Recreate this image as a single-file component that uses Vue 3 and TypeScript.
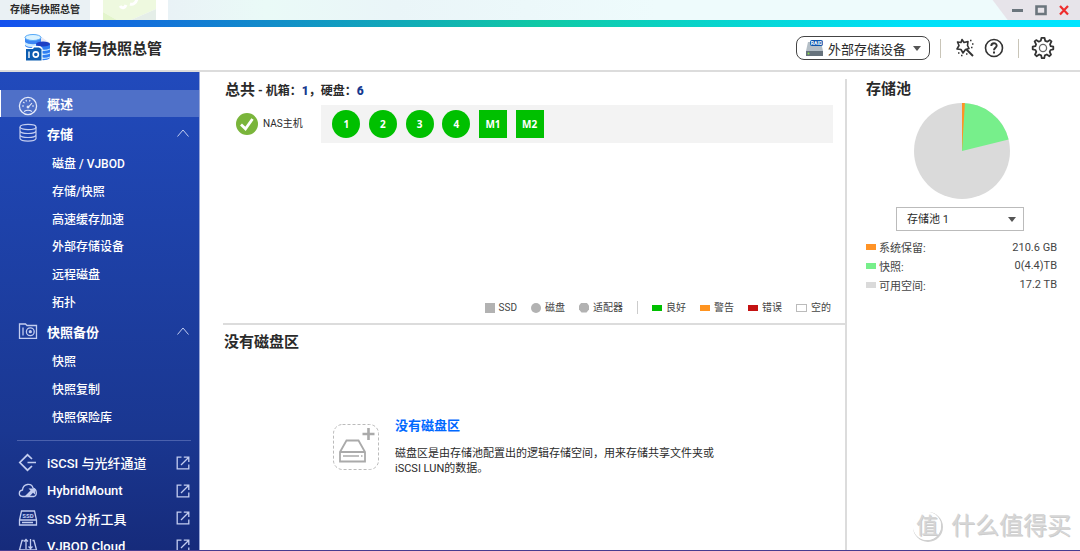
<script setup lang="ts">
import { ref } from 'vue'

interface NavGroup {
  id: string
  label: string
  icon: 'disks' | 'camera'
  items: string[]
}

interface Share {
  label: string
  value: string
  color: string
}

const groups: NavGroup[] = [
  {
    id: 'storage',
    label: '存储',
    icon: 'disks',
    items: ['磁盘 / VJBOD', '存储/快照', '高速缓存加速', '外部存储设备', '远程磁盘', '拓扑'],
  },
  { id: 'snapshot', label: '快照备份', icon: 'camera', items: ['快照', '快照复制', '快照保险库'] },
]

const apps: string[] = ['iSCSI 与光纤通道', 'HybridMount', 'SSD 分析工具', 'VJBOD Cloud']

const disks = [
  { name: '1', shape: 'round' },
  { name: '2', shape: 'round' },
  { name: '3', shape: 'round' },
  { name: '4', shape: 'round' },
  { name: 'M1', shape: 'square' },
  { name: 'M2', shape: 'square' },
]

const kinds = [
  { label: 'SSD', mark: 'ssd' },
  { label: '磁盘', mark: 'hdd' },
  { label: '适配器', mark: 'adapter' },
]

const states = [
  { label: '良好', mark: 'good' },
  { label: '警告', mark: 'warning' },
  { label: '错误', mark: 'error' },
  { label: '空的', mark: 'empty' },
]

const shares: Share[] = [
  { label: '系统保留', value: '210.6 GB', color: '#ff9326' },
  { label: '快照', value: '0(4.4)TB', color: '#77ef8b' },
  { label: '可用空间', value: '17.2 TB', color: '#dadada' },
]

const open = ref<Record<string, boolean>>({ storage: true, snapshot: true })
const pool = ref('存储池 1')
</script>

<template>
  <div class="window">
    <div class="titlebar">
      <span class="tab">存储与快照总管</span>
      <span class="ghost-tab">
        <svg width="53" height="20" viewBox="0 0 53 20" aria-hidden="true">
          <path d="M0 0H53V9L28 20H14L0 12Z" fill="#eef9df" />
          <path d="M0 12L14 20H0Z" fill="#e3f5cc" />
          <path d="M53 9V20H28Z" fill="#e5eee8" />
          <path d="M17 6c2 3 5 2 6-1M27 4c3 1 6-1 7-5" fill="none" stroke="#fff" stroke-width="3" />
        </svg>
      </span>
      <span class="sky"></span>
      <div class="window-buttons">
        <button type="button" aria-label="最小化">
          <svg width="12" height="12" viewBox="0 0 12 12"><path d="M0 6.500H11" stroke="#6b757d" stroke-width="3" /></svg>
        </button>
        <button type="button" aria-label="最大化">
          <svg width="12" height="12" viewBox="0 0 12 12"><path d="M1.500 2.500H10.500V10H1.500Z" fill="none" stroke="#6b757d" stroke-width="2.600" /></svg>
        </button>
        <button type="button" aria-label="关闭">
          <svg width="12" height="12" viewBox="0 0 12 12"><path d="M2 2L10 10.500M10 2L2 10.500" stroke="#ee2d2d" stroke-width="2.200" /></svg>
        </button>
      </div>
    </div>
    <div class="rainbow"></div>

    <header class="header">
      <svg class="logo" width="27" height="27" viewBox="0 0 27 27" aria-hidden="true">
        <path d="M16 2L26 9V13H16Z" fill="#e6e9f5" />
        <path d="M1 3V12C4 15 14 15 17 12V3Z" fill="#3b86f4" />
        <ellipse cx="9" cy="3.500" rx="8" ry="3" fill="#d9f2ff" stroke="#54a8f8" />
        <path d="M1 8C4 11 14 11 17 8V11C14 14 4 14 1 11Z" fill="#cbeaff" />
        <path d="M12 10V24C15 27 23 27 26 24V10Z" fill="#2f7df2" />
        <ellipse cx="19" cy="10" rx="7" ry="2.500" fill="#1d3fc4" />
        <path d="M17 16C21 17 24 16 26 15M17 20C21 21 24 20 26 19M17 24C21 25 24 24 26 23" fill="none" stroke="#c4e4ff" stroke-width="1.300" />
        <path d="M1 14H8L9 12H16L18.500 14V27H1Z" fill="#fff" />
        <path d="M2 15H9L10 13.500H15L17.500 15V26.500H2Z" fill="#0b5cb0" />
        <path d="M5 17.500V24" stroke="#fff" stroke-width="1.400" />
        <circle cx="11.800" cy="20.500" r="2.600" fill="none" stroke="#fff" stroke-width="1.600" />
      </svg>
      <h1>存储与快照总管</h1>
      <div class="tools">
        <button class="external" type="button" aria-haspopup="menu">
          <svg width="19" height="18" viewBox="0 0 19 18" aria-hidden="true">
            <path d="M3 3H16L18 12H1Z" fill="#b4bec6" />
            <path d="M1 12H18V17H1Z" fill="#66727c" />
            <circle cx="3.500" cy="14.500" r="1" fill="#8be04a" />
            <rect x="5" y="1" width="13" height="6" rx="2" fill="#0b55ae" />
            <text x="11.500" y="6" text-anchor="middle" class="raid">RAID</text>
          </svg>
          <span>外部存储设备</span>
          <i class="caret"></i>
        </button>
        <span class="divider"></span>
        <button class="tool" type="button" aria-label="工具">
          <svg width="20" height="20" viewBox="0 0 20 20" fill="none" stroke="#333">
            <path d="M7 1.500L9 4.500L13 3.500L12.500 7.500L14 10.500L10.500 11.500L8 15L6 11.500L2 11L4 7.500L2.500 4L6 4.500Z" stroke-width="1.600" stroke-linejoin="round" />
            <path d="M11.500 11.500L18 18" stroke-width="2" />
            <path d="M15 2.500h1.500M17 6h1.500M16 9.500h1.500M3 15h1.500M6 17.500h1.500M11 16h1.500" stroke-width="1.500" />
          </svg>
        </button>
        <button class="tool" type="button" aria-label="帮助">
          <svg width="20" height="20" viewBox="0 0 20 20" fill="none" stroke="#333">
            <circle cx="10" cy="10" r="8.500" stroke-width="1.600" />
            <path d="M7.300 8C7.300 4.200 12.800 4.500 12.700 7.700C12.600 9.700 10 9.800 10 12.200" stroke-width="1.900" />
            <path d="M10 13.500V15.500" stroke-width="2" />
          </svg>
        </button>
        <span class="divider"></span>
        <button class="tool gear" type="button" aria-label="设置">
          <svg width="24" height="24" viewBox="0 0 24 24" fill="none" stroke="#333" stroke-width="1.800" stroke-linejoin="round">
            <path d="M10.500 1.800H13.500L14.200 4.800L16.300 5.700L18.900 4.100L20.500 5.400L19 8.300L19.700 10.200L22.300 10.700V13.300L19.500 14L18.700 15.900L20 18.600L18.400 20.200L15.800 18.500L13.900 19.300L13.200 22.200H10.800L10.100 19.300L8.200 18.500L5.600 20.200L4 18.600L5.300 15.900L4.500 14L1.700 13.300V10.700L4.400 10.200L5.100 8.300L3.600 5.400L5.200 4.100L7.800 5.700L9.800 4.800Z" />
            <circle cx="12" cy="12" r="3.600" stroke-width="1.300" stroke="#666" />
          </svg>
        </button>
      </div>
    </header>

    <div class="body">
      <nav class="sidebar" aria-label="主菜单">
        <a class="nav-row active" href="#overview">
          <svg class="nav-icon" width="20" height="20" viewBox="0 0 20 20" fill="none" stroke="currentColor">
            <circle cx="10" cy="10" r="8.600" stroke-width="1.300" />
            <path d="M4 10H6M5.200 6L6.500 7.200M8 3.800L8.500 5.500M12 3.800L11.500 5.500M16 10H14M10 11.500L14 7.200M6 15.500Q10 13 14 15.500" stroke-width="1.100" />
            <circle cx="10" cy="11" r="1" fill="currentColor" />
          </svg>
          <span>概述</span>
        </a>
        <template v-for="group in groups" :key="group.id">
          <button class="nav-row head" type="button" :aria-expanded="open[group.id]" @click="open[group.id] = !open[group.id]">
            <svg v-if="group.icon === 'disks'" class="nav-icon" width="20" height="20" viewBox="0 0 20 20" fill="none" stroke="currentColor" stroke-width="1.200">
              <ellipse cx="10" cy="4" rx="8" ry="2.600" />
              <path d="M2 4V15.500C3 19 17 19 18 15.500V4M2 8C3 11.300 17 11.300 18 8M2 12C3 15.300 17 15.300 18 12" />
            </svg>
            <svg v-else class="nav-icon" width="20" height="20" viewBox="0 0 20 20" fill="none" stroke="currentColor" stroke-width="1.300">
              <path d="M1.500 17.300V3H7.500L9 4.500H18.500V17.300Z" />
              <path d="M5 6.500V14.500" />
              <circle cx="12.300" cy="10.700" r="3.900" />
              <circle cx="12.300" cy="10.700" r="1" fill="currentColor" />
            </svg>
            <span>{{ group.label }}</span>
            <svg class="chevron" width="14" height="10" viewBox="0 0 14 10" fill="none" stroke="currentColor">
              <path d="M1.500 8.500L7 2L12.500 8.500" />
            </svg>
          </button>
          <ul v-if="open[group.id]" :class="['subs', group.id]">
            <li v-for="item in group.items" :key="item"><a href="#">{{ item }}</a></li>
          </ul>
        </template>
        <hr />
        <ul class="apps">
          <li v-for="(app, i) in apps" :key="app">
            <a class="nav-row app" href="#">
              <svg class="nav-icon" width="20" height="20" viewBox="0 0 20 20" fill="none" stroke="currentColor" stroke-width="1.300">
                <template v-if="i === 0">
                  <path d="M14 6L9.500 1.800L1.800 9.500L9.500 17.200L14 13M9.500 9.500H18" stroke-width="1.700" />
                </template>
                <template v-else-if="i === 1">
                  <path d="M9 15.500H4.500C0 15 .5 9.500 4.500 9C5 2.500 13.500 1.500 15 7C19.500 8.500 19 14.500 16 15.500H9" />
                  <path d="M6.500 15.500L12.500 9.500L10.500 7.500H17V13.500L15 11.800L11.500 15.500Z" fill="currentColor" stroke="none" />
                </template>
                <template v-else-if="i === 2">
                  <path d="M1.500 12L3.500 3H16.500L18.500 12V17H1.500ZM1.500 12H18.500M4 14.500H15" />
                  <text x="10" y="10" text-anchor="middle" class="ssd-text">SSD</text>
                </template>
                <template v-else>
                  <path d="M1.500 14L4 4.500H5.500M14.500 4.500H16L18.500 14M1.500 14H18.500V19H1.500ZM8 13V3.500M6 5.500L8 3.500L10 5.500M12.500 3V12.500M10.500 10.500L12.500 12.500L14.500 10.500" />
                </template>
              </svg>
              <span>{{ app }}</span>
              <svg class="launch" width="14" height="14" viewBox="0 0 14 14" fill="none" stroke="currentColor" stroke-width="1.300">
                <path d="M5.500 1.200H1.200V12.800H12.800V8.500M5 9L12.300 1.700M7.800 1.200H12.800V6" />
              </svg>
            </a>
          </li>
        </ul>
      </nav>

      <main class="main">
        <section class="total">
          <h2>总共<small> - 机箱：<b>1</b>，硬盘：<b>6</b></small></h2>
          <div class="host">
            <div class="host-name">
              <svg width="22" height="22" viewBox="0 0 22 22" aria-hidden="true">
                <circle cx="11" cy="11" r="11" fill="#7ab53b" />
                <path d="M5 11.500L9.500 15.800L16.500 6" fill="none" stroke="#fff" stroke-width="2.800" />
              </svg>
              <span>NAS主机</span>
            </div>
            <div class="bay">
              <div class="slots">
                <button v-for="disk in disks" :key="disk.name" type="button" :class="['disk', disk.shape]">{{ disk.name }}</button>
              </div>
            </div>
          </div>
          <div class="legend">
            <span v-for="kind in kinds" :key="kind.mark" class="key"><i :class="['mark', kind.mark]"></i>{{ kind.label }}</span>
            <span class="bar"></span>
            <span v-for="state in states" :key="state.mark" class="key"><i :class="['mark', state.mark]"></i>{{ state.label }}</span>
          </div>
        </section>
        <section class="volumes">
          <h2>没有磁盘区</h2>
          <div class="blank">
            <svg width="46" height="46" viewBox="0 0 46 46" fill="none" stroke="#aaa" aria-hidden="true">
              <rect x=".5" y=".5" width="45" height="45" rx="9" stroke="#bbb" stroke-dasharray="3 2" />
              <path d="M7 28L13.500 16.500H25.500L32 28V37.500H7ZM7 28H32" stroke-width="1.800" />
              <path d="M10 32H26M28 32H29.500" stroke-width="1.500" />
              <path d="M35.500 4V16M29.500 10H41.500" stroke-width="2.600" />
            </svg>
            <div>
              <h3>没有磁盘区</h3>
              <p>磁盘区是由存储池配置出的逻辑存储空间，用来存储共享文件夹或iSCSI LUN的数据。</p>
            </div>
          </div>
        </section>
      </main>

      <aside class="pool">
        <h2>存储池</h2>
        <svg class="pie" width="96" height="96" viewBox="-48 -48 96 96" role="img" aria-label="存储池用量">
          <circle r="48" fill="#dadada" />
          <path d="M0 0V-48A48 48 0 0 1 46.600 -11.600Z" fill="#77ef8b" />
          <path d="M0 0V-48A48 48 0 0 1 2.900 -47.900Z" fill="#ff9326" />
        </svg>
        <label class="select">
          <select v-model="pool" aria-label="存储池">
            <option>存储池 1</option>
          </select>
          <i class="caret"></i>
        </label>
        <dl>
          <div v-for="share in shares" :key="share.label">
            <dt><i class="swatch" :style="{ background: share.color }"></i>{{ share.label }}:</dt>
            <dd>{{ share.value }}</dd>
          </div>
        </dl>
      </aside>
    </div>

    <div class="watermark">
      <span class="seal">值</span>
      <span>什么值得买</span>
    </div>
  </div>
</template>

<style>
body {
  margin: 0;
}
</style>

<style scoped>
.window {
  position: relative;
  display: flex;
  flex-direction: column;
  box-sizing: border-box;
  height: 100vh;
  overflow: hidden;
  border-bottom: 1px solid #463c91;
  background: #fff;
  color: #2a2a2a;
  font-family: Roboto, "Noto Sans CJK SC", sans-serif;
  font-size: 11px;
}
h1, h2, h3, p, ul, dl, dd {
  margin: 0;
  padding: 0;
}
ul {
  list-style: none;
}
a {
  color: inherit;
  text-decoration: none;
}
button, select {
  padding: 0;
  border: 0;
  background: none;
  color: inherit;
  font: inherit;
}
svg {
  display: block;
  flex: none;
}
.caret {
  border: 4px solid transparent;
  border-top: 5px solid #555;
  border-bottom: 0;
}

.titlebar {
  display: flex;
  flex: none;
  height: 20px;
}
.tab {
  box-sizing: border-box;
  width: 90px;
  padding-left: 10px;
  background: #eaf1f4;
  font-size: 10px;
  font-weight: 700;
  line-height: 20px;
}
.ghost-tab {
  padding: 0 12px 0 13px;
}
.sky {
  flex: 1;
  background: linear-gradient(90deg, #e9f2f6, #eafaf7 12%, #eaf5f8 28%, #eefbfc 60%);
}
.window-buttons {
  display: flex;
  align-items: center;
  gap: 11px;
  padding: 0 10px 0 30px;
  background: linear-gradient(53deg, #eefbfc 20px, #e7e4ea 21px);
}
.rainbow {
  flex: none;
  height: 7px;
  background: linear-gradient(90deg, #1450ee, #10c9a5 50%, #00e0f8 84%, #00e5ff);
}

.header {
  display: flex;
  flex: none;
  align-items: center;
  box-sizing: border-box;
  height: 45px;
  padding: 0 25px 0 24px;
  border-bottom: 2px solid #dcdcdc;
}
.logo {
  margin-bottom: 3px;
}
h1 {
  margin: 0 0 3px 6px;
  font-size: 15px;
  font-weight: 700;
}
.tools {
  display: flex;
  align-items: center;
  margin-left: auto;
  margin-bottom: 1px;
}
.external {
  display: flex;
  align-items: center;
  box-sizing: border-box;
  width: 134px;
  height: 24px;
  padding: 0 8px;
  border: 1px solid #444;
  border-radius: 8px;
  font-size: 13px;
}
.external span {
  margin: 0 auto 0 4px;
}
.raid {
  fill: #fff;
  font-size: 5px;
  font-weight: 700;
}
.divider {
  width: 1px;
  height: 19px;
  margin: 0 14px 0 10px;
  background: #c9c5b8;
}
.tool {
  margin-right: 9px;
}
.tool + .divider {
  margin: 0 12px 0 5px;
}
.gear {
  margin-right: 0;
}

.body {
  display: flex;
  flex: 1;
  min-height: 0;
}
.sidebar {
  box-sizing: border-box;
  flex: none;
  width: 200px;
  padding-top: 18px;
  overflow: hidden;
  border-right: 1px solid #9aa8d8;
  background: linear-gradient(#214abc, #1a3791 75%, #162b7b);
  color: #fff;
}
.nav-row {
  display: flex;
  align-items: center;
  box-sizing: border-box;
  width: 100%;
  padding: 0 9px 0 18px;
  font-size: 13px;
  font-weight: 700;
  text-align: left;
}
.nav-row span {
  flex: 1;
  margin-left: 9px;
}
.nav-icon {
  color: #c3cdf0;
}
.active {
  height: 27px;
  padding-left: 17px;
  border-left: 1px solid #fff;
  background: #4f70c8;
}
.active .nav-icon {
  margin-top: 4px;
  color: #e6ebfa;
}
.head {
  height: 32px;
}
.app {
  font-weight: 500;
}
.chevron, .launch {
  color: #c3cdf0;
}
.subs {
  display: grid;
  align-items: center;
  padding-left: 52px;
  font-size: 12px;
  font-weight: 500;
}
.storage {
  height: 166px;
}
.snapshot {
  height: 83px;
}
hr {
  height: 1px;
  margin: 10px 8px 8px 17px;
  border: 0;
  background: #4a61ad;
}
.apps {
  display: grid;
  align-items: center;
  height: 111px;
}
.ssd-text {
  fill: currentColor;
  stroke: none;
  font-size: 6px;
  font-weight: 700;
}

.main {
  display: flex;
  flex: 1;
  flex-direction: column;
  min-width: 0;
  margin-top: 7px;
  border-right: 2px solid #dcdcdc;
}
h2 {
  font-size: 15px;
  font-weight: 700;
  line-height: 22px;
}
.total {
  display: flex;
  flex: none;
  flex-direction: column;
  box-sizing: border-box;
  height: 246px;
  margin-left: 23px;
  border-bottom: 2px solid #dcdcdc;
}
.total h2 {
  margin-left: 2px;
}
small {
  font-size: 12px;
}
small b {
  color: #16398f;
}
.host {
  display: flex;
  margin: 3px 12px 0 13px;
}
.host-name {
  display: flex;
  align-items: center;
  gap: 5px;
  width: 85px;
  font-size: 10px;
  line-height: 12px;
}
.bay {
  flex: 1;
  padding: 5px 7px;
  background: #f3f3f3;
}
.slots {
  display: grid;
  grid-template-columns: repeat(6, 1fr);
  justify-items: center;
  width: 220px;
}
.disk {
  width: 28px;
  height: 28px;
  background: #00c000;
  color: #fff;
  font-family: "Noto Sans", sans-serif;
  font-size: 10px;
  font-weight: 700;
}
.round {
  border-radius: 50%;
}
.legend {
  display: flex;
  align-items: center;
  justify-content: flex-end;
  gap: 14px;
  margin: auto 14px 8px 0;
  color: #444;
  font-size: 10px;
  line-height: 15px;
}
.key {
  display: flex;
  align-items: center;
  gap: 4px;
}
.mark {
  box-sizing: border-box;
  width: 10px;
  height: 6px;
}
.ssd, .hdd, .adapter {
  height: 10px;
  background: #b2b2b2;
}
.hdd {
  border-radius: 50%;
}
.adapter {
  clip-path: polygon(25% 0, 75% 0, 100% 30%, 100% 70%, 75% 100%, 25% 100%, 0 70%, 0 30%);
}
.good {
  background: #00c000;
}
.warning {
  background: #ff9420;
}
.error {
  background: #c41212;
}
.empty {
  width: 11px;
  height: 8px;
  border: 1px solid #bbb;
}
.bar {
  width: 1px;
  height: 13px;
  background: #ccc;
}
.volumes {
  display: flex;
  flex: 1;
  flex-direction: column;
  padding: 6px 24px 0;
}
.blank {
  display: flex;
  flex: 1;
  align-items: center;
  justify-content: center;
  gap: 16px;
  padding: 0 0 10px 5px;
}
h3 {
  margin-bottom: 11px;
  color: #0068ff;
  font-size: 13px;
  font-weight: 700;
  line-height: 18px;
}
p {
  max-width: 322px;
  line-height: 15px;
}

.pool {
  display: flex;
  flex: none;
  flex-direction: column;
  align-items: center;
  box-sizing: border-box;
  width: 233px;
  padding: 6px 23px 0 19px;
}
.pool h2 {
  align-self: flex-start;
}
.pie {
  margin-top: 3px;
}
.select {
  display: flex;
  align-items: center;
  box-sizing: border-box;
  width: 128px;
  height: 24px;
  margin: 8px 3px 7px 0;
  padding: 0 7px 0 10px;
  border: 1px solid #bbb;
}
select {
  flex: 1;
  outline: 0;
  appearance: none;
}
dl {
  display: grid;
  align-items: center;
  width: 100%;
  height: 56px;
  color: #444;
}
dl div {
  display: flex;
  align-items: center;
  justify-content: space-between;
}
dt {
  display: flex;
  align-items: center;
  gap: 3px;
}
.swatch {
  width: 10px;
  height: 6px;
}

.watermark {
  position: absolute;
  right: 9px;
  bottom: 8px;
  display: flex;
  align-items: center;
  gap: 10px;
  color: #d6d6d6;
  font-size: 24px;
  line-height: 32px;
  text-shadow: 1px 1px 0 #ccc;
  pointer-events: none;
}
.seal {
  width: 28px;
  height: 28px;
  border-radius: 50%;
  box-shadow: 1px 1px 0 1px #d0d0d0, inset 0 0 0 1px #fff;
  font-size: 22px;
  line-height: 28px;
  text-align: center;
}
</style>
